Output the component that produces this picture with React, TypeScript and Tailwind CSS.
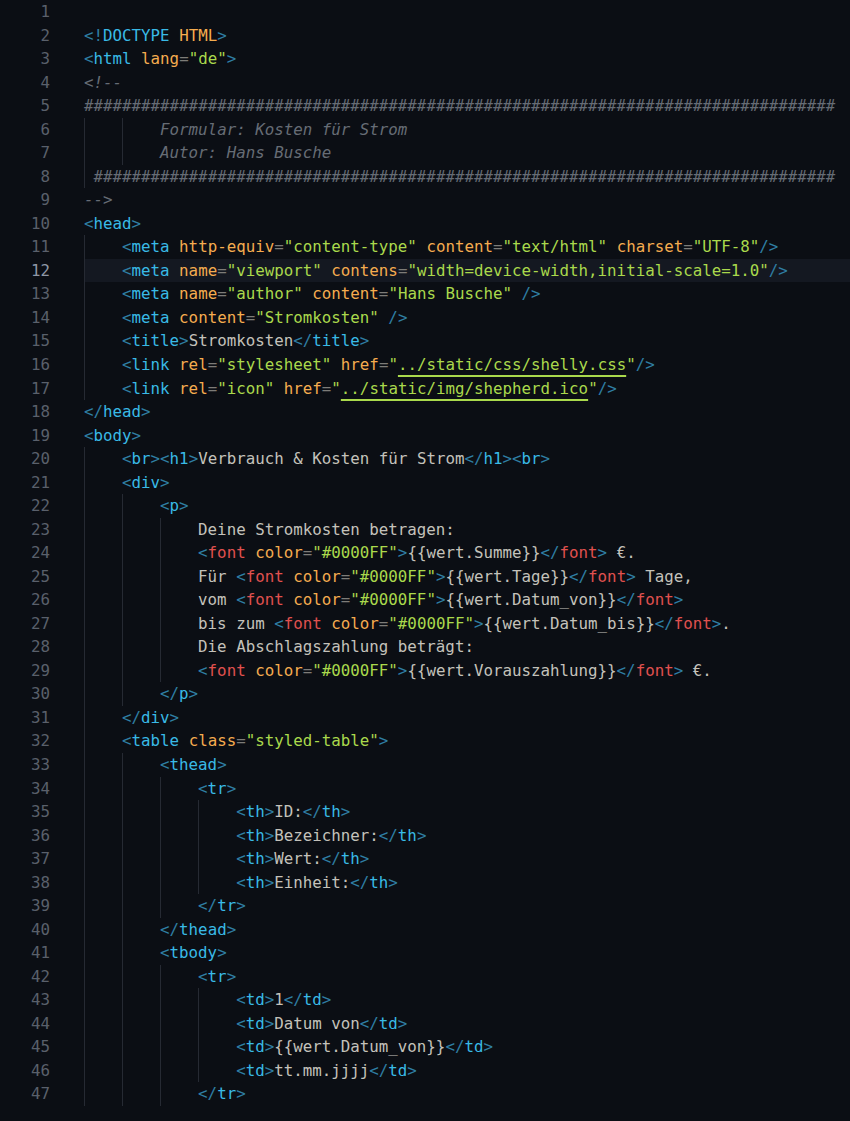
import React from 'react'

// Quelltext, Zeile für Zeile
const SOURCE: string[] = [
  '',
  '<!DOCTYPE HTML>',
  '<html lang="de">',
  '<!--',
  '#'.repeat(79),
  '        Formular: Kosten für Strom',
  '        Autor: Hans Busche',
  ' ' + '#'.repeat(78),
  '-->',
  '<head>',
  '    <meta http-equiv="content-type" content="text/html" charset="UTF-8"/>',
  '    <meta name="viewport" contens="width=device-width,initial-scale=1.0"/>',
  '    <meta name="author" content="Hans Busche" />',
  '    <meta content="Stromkosten" />',
  '    <title>Stromkosten</title>',
  '    <link rel="stylesheet" href="../static/css/shelly.css"/>',
  '    <link rel="icon" href="../static/img/shepherd.ico"/>',
  '</head>',
  '<body>',
  '    <br><h1>Verbrauch & Kosten für Strom</h1><br>',
  '    <div>',
  '        <p>',
  '            Deine Stromkosten betragen:',
  '            <font color="#0000FF">{{wert.Summe}}</font> €.',
  '            Für <font color="#0000FF">{{wert.Tage}}</font> Tage,',
  '            vom <font color="#0000FF">{{wert.Datum_von}}</font>',
  '            bis zum <font color="#0000FF">{{wert.Datum_bis}}</font>.',
  '            Die Abschlagszahlung beträgt:',
  '            <font color="#0000FF">{{wert.Vorauszahlung}}</font> €.',
  '        </p>',
  '    </div>',
  '    <table class="styled-table">',
  '        <thead>',
  '            <tr>',
  '                <th>ID:</th>',
  '                <th>Bezeichner:</th>',
  '                <th>Wert:</th>',
  '                <th>Einheit:</th>',
  '            </tr>',
  '        </thead>',
  '        <tbody>',
  '            <tr>',
  '                <td>1</td>',
  '                <td>Datum von</td>',
  '                <td>{{wert.Datum_von}}</td>',
  '                <td>tt.mm.jjjj</td>',
  '            </tr>',
]

const ACTIVE_LINE = 12

type Kind = 'b' | 't' | 'f' | 'a' | 's' | 'u' | 'e' | 'x' | 'c'
type Token = [Kind, string]

const COLORS: Record<Kind, string> = {
  b: 'text-[#2f7ea3]',
  t: 'text-[#39bae6]',
  f: 'text-[#e0514f]',
  a: 'text-[#f5ac4f]',
  s: 'text-[#aad94c]',
  u: 'text-[#aad94c] underline decoration-[#aad94c] decoration-2 underline-offset-[5px]',
  e: 'text-[#7d7c78]',
  x: 'text-[#c4c2bb]',
  c: 'text-[#666c75] italic',
}

function tokenize(code: string): Token[] {
  const out: Token[] = []
  let i = 0
  let text = ''
  const flush = () => {
    if (text) out.push(['x', text])
    text = ''
  }
  while (i < code.length) {
    if (code[i] !== '<') {
      text += code[i++]
      continue
    }
    flush()
    let open = '<'
    i++
    if (code[i] === '/' || code[i] === '!') open += code[i++]
    out.push(['b', open])
    let name = ''
    while (i < code.length && /[A-Za-z0-9]/.test(code[i])) name += code[i++]
    out.push([name === 'font' ? 'f' : 't', name])
    let lastAttr = ''
    while (i < code.length && code[i] !== '>') {
      const ch = code[i]
      if (ch === ' ') {
        out.push(['x', ' '])
        i++
      } else if (ch === '=') {
        out.push(['e', '='])
        i++
      } else if (ch === '"') {
        const end = code.indexOf('"', i + 1)
        const value = code.slice(i + 1, end)
        if (lastAttr === 'href') {
          out.push(['s', '"'])
          out.push(['u', value])
          out.push(['s', '"'])
        } else {
          out.push(['s', '"' + value + '"'])
        }
        i = end + 1
      } else if (ch === '/') {
        out.push(['b', '/'])
        i++
      } else {
        let attr = ''
        while (i < code.length && /[A-Za-z-]/.test(code[i])) attr += code[i++]
        if (!attr) attr = code[i++]
        lastAttr = attr
        out.push(['a', attr])
      }
    }
    if (code[i] === '>') {
      out.push(['b', '>'])
      i++
    }
  }
  flush()
  return out
}

function CodeLine({ line, n }: { line: string; n: number }) {
  const indent = line.length - line.trimStart().length
  const body = line.slice(indent)
  const isComment = n >= 4 && n <= 9
  const tokens: Token[] = isComment ? [['c', body]] : tokenize(body)

  const guides: number[] = []
  for (let c = 0; c < indent; c += 4) guides.push(Math.min(4, indent - c))

  const active = n === ACTIVE_LINE

  return (
    <div className="flex h-[23.54px] items-center">
      <div
        className={`w-[84px] shrink-0 pr-[34px] text-right ${
          active ? 'text-[#8f97a6]' : 'text-[#5a606b]'
        }`}
      >
        {n}
      </div>
      <div className={`flex h-full flex-1 items-center whitespace-pre ${active ? 'bg-[#141821]' : ''}`}>
        {guides.map((w, gi) => (
          <span
            key={gi}
            className={`inline-block h-full border-l border-[#262a33] ${w === 4 ? 'w-[4ch]' : 'w-[1ch]'}`}
          />
        ))}
        {tokens.map(([k, t], ti) => (
          <span key={ti} className={COLORS[k]}>
            {t}
          </span>
        ))}
      </div>
    </div>
  )
}

export default function App() {
  return (
    <div className="h-[1121px] w-[850px] overflow-hidden bg-[#0b0e14] font-['DejaVu_Sans_Mono',monospace] text-[15.8px] leading-[23.54px]">
      {SOURCE.map((line, idx) => (
        <CodeLine key={idx} line={line} n={idx + 1} />
      ))}
    </div>
  )
}
